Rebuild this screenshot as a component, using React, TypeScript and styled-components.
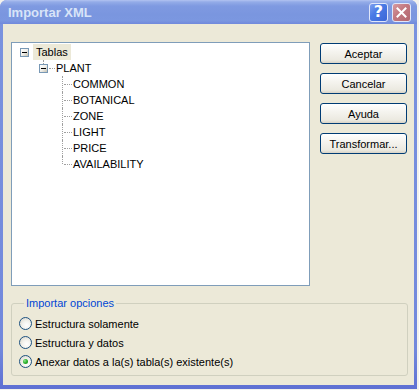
import styled, { createGlobalStyle } from 'styled-components';

const GlobalStyle = createGlobalStyle`
  html, body {
    margin: 0;
    padding: 0;
    background: #f3f2ed;
  }
  body {
    font-family: "Liberation Sans", Arial, sans-serif;
    font-size: 11px;
    color: #000;
  }
`;

const Window = styled.div`
  width: 417px;
  height: 389px;
  box-sizing: border-box;
  display: flex;
  flex-direction: column;
  padding: 0 3px 4px;
  background: linear-gradient(180deg, #7a93df 0%, #7288dc 90%, #5e70d3 100%);
  border-radius: 7px 7px 0 0;
`;

const TitleBar = styled.div`
  height: 24px;
  margin: 0 -3px;
  padding: 0 6px 0 8px;
  display: flex;
  align-items: center;
  border-radius: 7px 7px 0 0;
  background: linear-gradient(
    180deg,
    #b2c3f1 0%,
    #94ace8 8%,
    #7f9ae1 25%,
    #7a96df 60%,
    #7b97e0 85%,
    #7089dc 100%
  );
`;

const Title = styled.div`
  flex: 1;
  font-family: "Liberation Sans", Arial, sans-serif;
  font-weight: bold;
  font-size: 13px;
  color: #d8e4f8;
  padding-top: 1px;
`;

const TitleButton = styled.div<{ $variant: 'help' | 'close' }>`
  width: 19px;
  height: 19px;
  box-sizing: border-box;
  margin-left: 4px;
  border: 1px solid #dfe6fa;
  border-radius: 3px;
  display: flex;
  align-items: center;
  justify-content: center;
  color: #fff;
  font-family: "DejaVu Sans", sans-serif;
  font-weight: bold;
  font-size: 16px;
  line-height: 1;
  background: ${(p) =>
    p.$variant === 'help'
      ? 'linear-gradient(135deg, #7fa0f0 0%, #4a7be6 40%, #3b66d6 100%)'
      : 'linear-gradient(135deg, #d79aa0 0%, #c27880 45%, #b2676f 100%)'};
`;

const Body = styled.div`
  flex: 1;
  background: #ece9d8;
  padding: 18px 7px 0 8px;
  display: flex;
  flex-direction: column;
`;

const TopRow = styled.div`
  display: flex;
  align-items: flex-start;
`;

const TreePanel = styled.div`
  width: 299px;
  height: 244px;
  box-sizing: border-box;
  border: 1px solid #7f9db9;
  background: #fff;
  padding: 1px 0 0 8px;
`;

const TreeRow = styled.div<{ $indent: number }>`
  height: 16px;
  display: flex;
  align-items: center;
  padding-left: ${(p) => p.$indent}px;
`;

const ExpandBox = styled.span<{ $up?: boolean }>`
  position: relative;
  width: 9px;
  height: 9px;
  box-sizing: border-box;
  border: 1px solid #7898b5;
  background: linear-gradient(135deg, #ffffff 0%, #f0efea 50%, #c6c2b2 100%);
  flex-shrink: 0;

  &::after {
    content: '';
    position: absolute;
    left: 1px;
    top: 3px;
    width: 5px;
    height: 1px;
    background: #000;
  }

  ${(p) =>
    p.$up &&
    `
    &::before {
      content: '';
      position: absolute;
      left: 3px;
      top: -5px;
      height: 4px;
      border-left: 1px dotted #a0a0a0;
    }
  `}
`;

const HLine = styled.span<{ $w: number }>`
  width: ${(p) => p.$w}px;
  height: 0;
  border-top: 1px dotted #a0a0a0;
  margin-left: 1px;
  flex-shrink: 0;
`;

const Connector = styled.span<{ $last?: boolean }>`
  position: relative;
  width: 10px;
  height: 100%;
  flex-shrink: 0;

  &::before {
    content: '';
    position: absolute;
    left: 0;
    top: 0;
    height: ${(p) => (p.$last ? '8px' : '100%')};
    border-left: 1px dotted #a0a0a0;
  }

  &::after {
    content: '';
    position: absolute;
    left: 2px;
    right: 0;
    top: 8px;
    border-top: 1px dotted #a0a0a0;
  }
`;

const NodeLabel = styled.span<{ $selected?: boolean; $gap: number }>`
  height: 16px;
  line-height: 16px;
  margin-left: ${(p) => p.$gap}px;
  padding: 0 3px;
  white-space: nowrap;
  background: ${(p) => (p.$selected ? '#ece9d8' : 'transparent')};
`;

const ButtonColumn = styled.div`
  margin-left: 10px;
  margin-top: 1px;
  display: flex;
  flex-direction: column;
  gap: 9px;
`;

const Button = styled.button`
  width: 87px;
  height: 21px;
  box-sizing: border-box;
  border: 1px solid #003c74;
  border-radius: 3px;
  background: linear-gradient(180deg, #ffffff 0%, #f5f4ef 40%, #ebe9e0 85%, #d8d3c6 100%);
  font-family: "Liberation Sans", Arial, sans-serif;
  font-size: 11px;
  color: #000;
  padding: 0;
`;

const GroupBox = styled.fieldset`
  width: 397px;
  box-sizing: border-box;
  margin: 11px 0 0;
  padding: 4px 0 4px 7px;
  border: 1px solid #d0d0bf;
  border-radius: 3px;
`;

const Legend = styled.legend`
  margin-left: 5px;
  padding: 0 2px;
  line-height: 13px;
  color: #0046d5;
`;

const RadioRow = styled.label`
  height: 19px;
  display: flex;
  align-items: center;
`;

const RadioCircle = styled.span<{ $checked?: boolean }>`
  width: 13px;
  height: 13px;
  box-sizing: border-box;
  border-radius: 50%;
  border: 1px solid #1c5180;
  background: radial-gradient(circle at 60% 65%, #ffffff 0%, #f4f3ee 40%, #d6d3c6 100%);
  display: flex;
  align-items: center;
  justify-content: center;

  &::after {
    content: '';
    display: ${(p) => (p.$checked ? 'block' : 'none')};
    width: 5px;
    height: 5px;
    border-radius: 50%;
    background: radial-gradient(circle at 35% 35%, #8ee68e 0%, #2ab02a 50%, #168d16 100%);
  }
`;

const RadioText = styled.span`
  margin-left: 3px;
  white-space: nowrap;
`;

const children = ['COMMON', 'BOTANICAL', 'ZONE', 'LIGHT', 'PRICE', 'AVAILABILITY'];

const options = [
  { label: 'Estructura solamente', checked: false },
  { label: 'Estructura y datos', checked: false },
  { label: 'Anexar datos a la(s) tabla(s) existente(s)', checked: true },
];

export default function App() {
  return (
    <>
      <GlobalStyle />
      <Window>
        <TitleBar>
          <Title>Importar XML</Title>
          <TitleButton $variant="help">?</TitleButton>
          <TitleButton $variant="close">
            <svg width="11" height="11" viewBox="0 0 11 11">
              <path d="M1.5 1.5 L9.5 9.5 M9.5 1.5 L1.5 9.5" stroke="#fff" strokeWidth="2" strokeLinecap="square" />
            </svg>
          </TitleButton>
        </TitleBar>
        <Body>
          <TopRow>
            <TreePanel>
              <TreeRow $indent={0}>
                <ExpandBox />
                <NodeLabel $selected $gap={4}>Tablas</NodeLabel>
              </TreeRow>
              <TreeRow $indent={19}>
                <ExpandBox $up />
                <HLine $w={6} />
                <NodeLabel $gap={-2}>PLANT</NodeLabel>
              </TreeRow>
              {children.map((c, i) => (
                <TreeRow key={c} $indent={42}>
                  <Connector $last={i === children.length - 1} />
                  <NodeLabel $gap={-2}>{c}</NodeLabel>
                </TreeRow>
              ))}
            </TreePanel>
            <ButtonColumn>
              <Button>Aceptar</Button>
              <Button>Cancelar</Button>
              <Button>Ayuda</Button>
              <Button>Transformar...</Button>
            </ButtonColumn>
          </TopRow>
          <GroupBox>
            <Legend>Importar opciones</Legend>
            {options.map((o) => (
              <RadioRow key={o.label}>
                <RadioCircle $checked={o.checked} />
                <RadioText>{o.label}</RadioText>
              </RadioRow>
            ))}
          </GroupBox>
        </Body>
      </Window>
    </>
  );
}
